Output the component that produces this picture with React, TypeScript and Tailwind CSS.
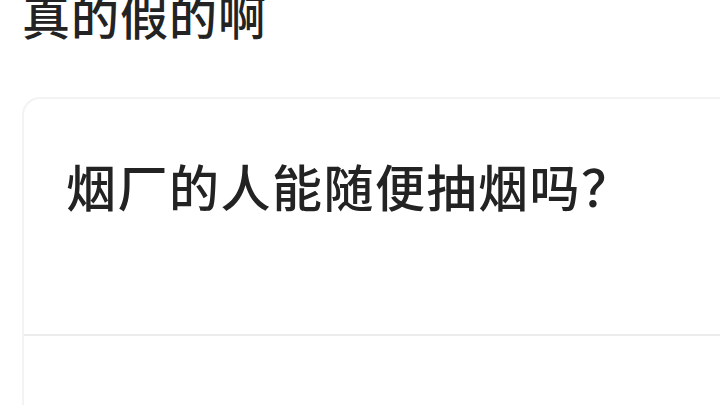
export default function App() {
  return (
    <div
      className="w-[720px] h-[405px] overflow-hidden bg-white text-[#232323]"
      style={{ fontFamily: '"Noto Sans CJK SC", "Noto Sans", sans-serif' }}
    >
      <div className="pl-[22px] -mt-[14px] text-[48px] leading-[56px] font-medium tracking-[1px]">
        真的假的啊
      </div>
      <div className="ml-[22px] mt-[55px] rounded-tl-[18px] border-l-2 border-t-2 border-[#f3f3f3]">
        <div className="pl-[42px] pt-[56px] pb-[119px] text-[50px] leading-[60px] font-medium tracking-[1.5px]">
          烟厂的人能随便抽烟吗？
        </div>
        <div className="h-[2px] bg-[#ececec]" />
        <div className="h-[80px]" />
      </div>
    </div>
  );
}
